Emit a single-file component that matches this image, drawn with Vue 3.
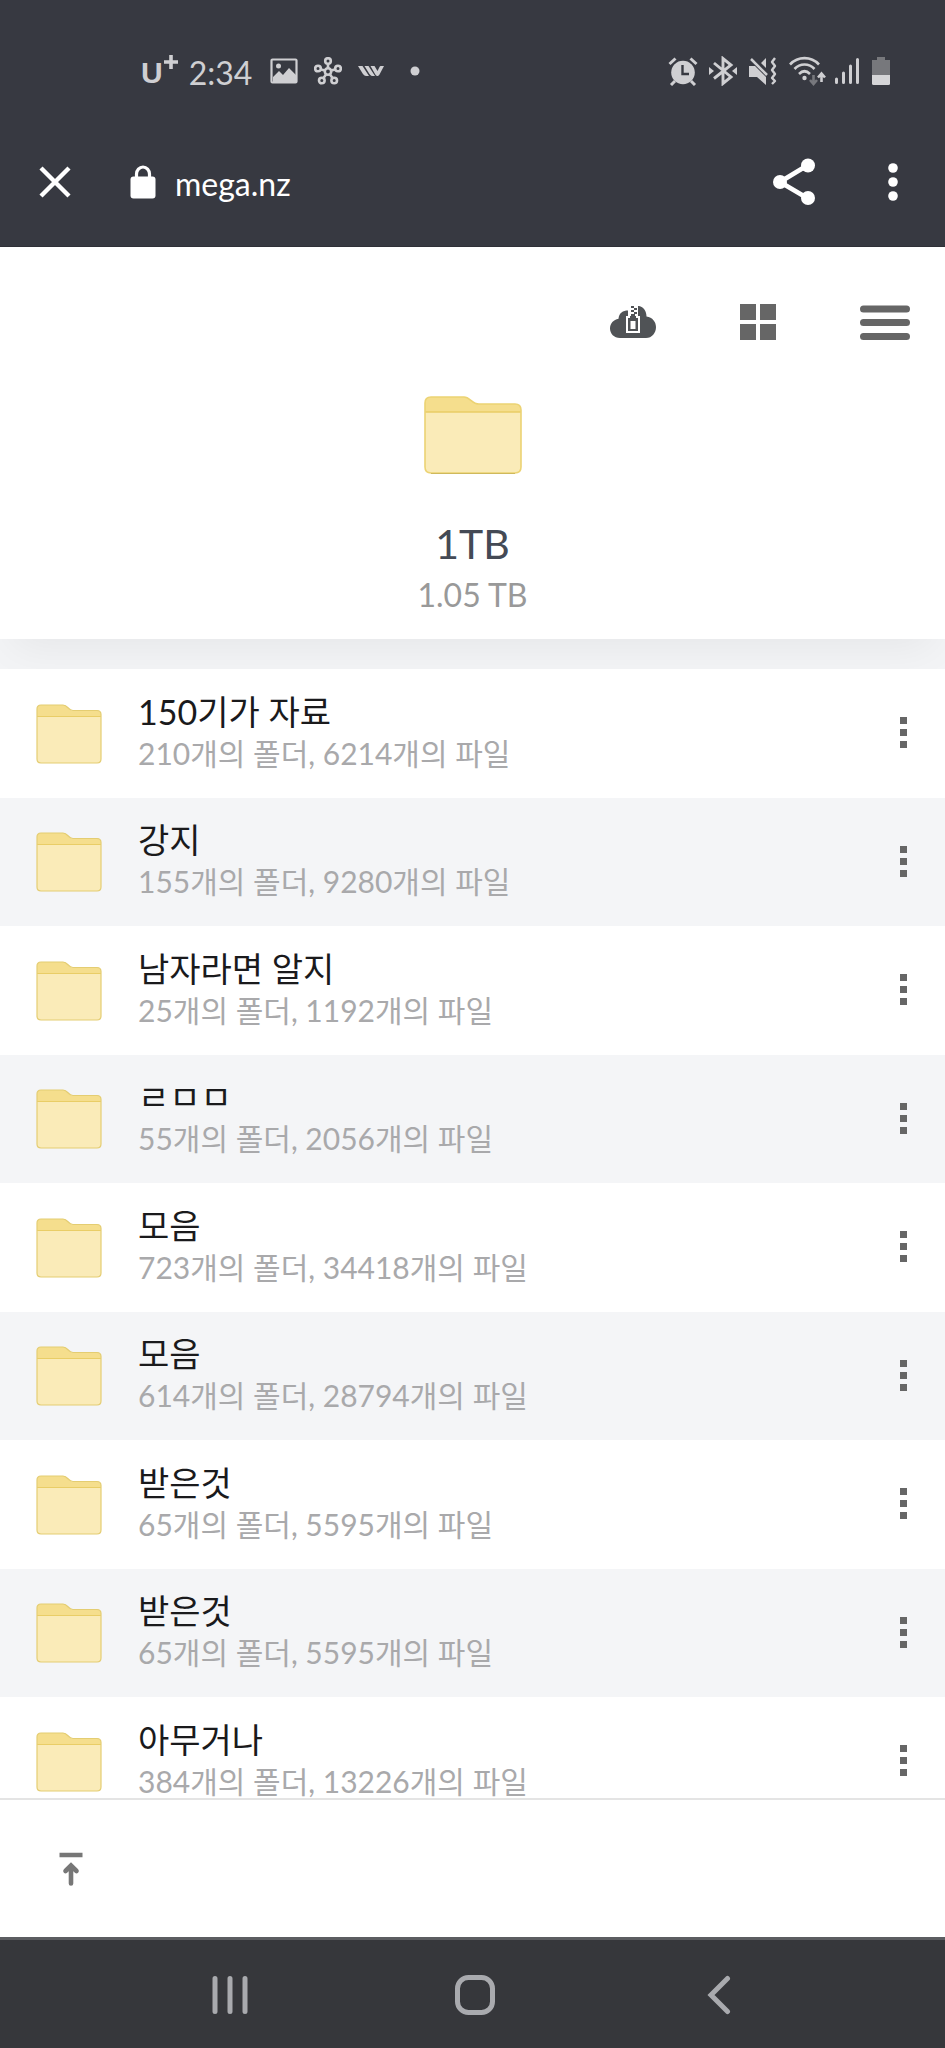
<script setup>
const folders = [
  { id: 1, name: '150기가 자료', dirs: 210, files: 6214 },
  { id: 2, name: '강지', dirs: 155, files: 9280 },
  { id: 3, name: '남자라면 알지', dirs: 25, files: 1192 },
  { id: 4, name: 'ㄹㅁㅁ', dirs: 55, files: 2056 },
  { id: 5, name: '모음', dirs: 723, files: 34418 },
  { id: 6, name: '모음', dirs: 614, files: 28794 },
  { id: 7, name: '받은것', dirs: 65, files: 5595 },
  { id: 8, name: '받은것', dirs: 65, files: 5595 },
  { id: 9, name: '아무거나', dirs: 384, files: 13226 },
]
</script>

<template>
  <div class="screen">
    <header class="chrome">
      <div class="status">
        <div class="status-group left">
          <span class="carrier">U<svg width="16" height="16" viewBox="0 0 16 16"><path d="M8 1v14M1 8h14" stroke="currentColor" stroke-width="3.600" /></svg></span>
          <time class="clock">2:34</time>
          <svg class="picture" width="28" height="28" viewBox="0 0 28 28">
            <rect x="1.500" y="2.500" width="25" height="23" rx="1" fill="none" stroke="currentColor" stroke-width="2.200" />
            <circle cx="8.500" cy="9" r="2.500" fill="currentColor" />
            <path d="M3 20l6-6 4 4 6-7 7 7v7H3z" fill="currentColor" />
          </svg>
          <svg class="hub" width="28" height="28" viewBox="0 0 28 28" fill="none" stroke="currentColor" stroke-width="2.600">
            <circle cx="14" cy="14.500" r="3.200" />
            <circle cx="14" cy="4" r="2.800" />
            <circle cx="4" cy="11.500" r="2.800" />
            <circle cx="24" cy="11.500" r="2.800" />
            <circle cx="7.800" cy="23.500" r="2.800" />
            <circle cx="20.200" cy="23.500" r="2.800" />
            <path d="M14 7v4M7 12.500l4 1M21 12.500l-4 1M9.500 21l2.500-3.500M18.500 21L16 17.500" />
          </svg>
          <svg class="wing" width="26" height="12" viewBox="0 0 26 12" fill="currentColor">
            <path d="M0 1h4.500L11 11H8.500C6 11 5 9 4 7.500zM6.500 1h4l6.500 10h-2.500c-2 0-3-2-4-3.500zM12.500 1h4l3 5 2-4c.4-.8.800-1 1.500-1H26l-4.500 8.500c-.8 1.500-1.500 1.500-2.200 1.500-1 0-1.600-.8-2.300-2z" />
          </svg>
          <svg class="dot" width="10" height="10" viewBox="0 0 10 10"><circle cx="5" cy="5" r="4.500" fill="currentColor" /></svg>
        </div>
        <div class="status-group right">
          <svg width="30" height="30" viewBox="0 0 30 30" fill="none" stroke="currentColor">
            <circle cx="15" cy="16.500" r="11.800" fill="currentColor" stroke="none" />
            <path d="M1.500 8l6-5.500M28.500 8l-6-5.500" stroke-width="3" />
            <path d="M7 25l-4 4M23 25l4 4" stroke-width="3" />
            <path d="M14.500 9v9H21" stroke="#373941" stroke-width="2.400" />
          </svg>
          <svg width="28" height="30" viewBox="0 0 28 30" fill="none" stroke="currentColor" stroke-width="2.900">
            <path d="M5 7l17 14-8 6.500V2.500L22 9 5 22.500" />
            <path d="M0 11l5 4-5 4zM28 11l-5 4 5 4z" fill="currentColor" stroke="none" />
          </svg>
          <svg width="30" height="30" viewBox="0 0 30 30">
            <path d="M1 10h6l11 11v8l-9-8H1zM18 2v10l-5-5z" fill="currentColor" />
            <path d="M3 3l16 16" stroke="currentColor" stroke-width="2.500" />
            <path d="M27 2l-3 4 3 4-3 4 3 4-3 4 3 3-3 3" fill="none" stroke="currentColor" stroke-width="2.400" stroke-linejoin="round" />
          </svg>
          <svg class="wifi" width="37" height="30" viewBox="0 0 37 30" fill="none" stroke="currentColor" stroke-width="2.600">
            <path d="M1 8.500c8-8.500 21-8.500 29 0M5.500 13c5.500-6 14.500-6 20 0M10 18c3.500-3.500 7.500-3.500 11 0" />
            <circle cx="15.500" cy="22" r="2.200" fill="currentColor" stroke="none" />
            <path d="M24.500 19v8M21 24l3.500 4 3.500-4" stroke="#77787d" />
            <path d="M32.500 26v-8M29 21.500l3.500-4 3.500 4" />
          </svg>
          <svg width="26" height="28" viewBox="0 0 26 28" stroke="currentColor" stroke-width="3" stroke-linecap="round">
            <path d="M2.500 22v3.500M9.500 16v9.500M16.500 9v16.500M23.500 2.500v23" />
          </svg>
          <svg class="battery" width="20" height="30" viewBox="0 0 20 30">
            <path d="M6 1h8v3h5v15H1V4h5z" fill="#77787c" />
            <path d="M1 19h18v8.500q0 1.500-1.500 1.500h-15Q1 29 1 27.500z" fill="#d5d5d7" />
          </svg>
        </div>
      </div>

      <div class="toolbar">
        <button class="bar-btn close" type="button" aria-label="닫기">
          <svg width="32" height="32" viewBox="0 0 32 32"><path d="M2 2l28 28M30 2L2 30" stroke="currentColor" stroke-width="4.400" /></svg>
        </button>
        <svg class="lock" width="26" height="34" viewBox="0 0 26 34">
          <path d="M6.500 14V9a6.500 7 0 0 1 13 0v5" fill="none" stroke="currentColor" stroke-width="3.200" />
          <rect x="0.500" y="11.500" width="25" height="22" rx="3" fill="currentColor" />
        </svg>
        <span class="host">mega.nz</span>
        <button class="bar-btn share" type="button" aria-label="공유">
          <svg width="42" height="48" viewBox="0 0 42 48">
            <path d="M35 7L7 24l28 16.500" fill="none" stroke="currentColor" stroke-width="4.800" />
            <circle cx="35" cy="7.500" r="7" fill="currentColor" /><circle cx="7" cy="24" r="7" fill="currentColor" /><circle cx="35" cy="40" r="7" fill="currentColor" />
          </svg>
        </button>
        <button class="bar-btn" type="button" aria-label="더보기">
          <svg width="10" height="38" viewBox="0 0 10 38" fill="currentColor"><circle cx="5" cy="5" r="4.800" /><circle cx="5" cy="19" r="4.800" /><circle cx="5" cy="33" r="4.800" /></svg>
        </button>
      </div>
    </header>

    <section class="summary">
      <div class="actions">
        <button type="button" aria-label="ZIP으로 다운로드">
          <svg width="48" height="36" viewBox="0 0 48 36">
            <path d="M11 34C5 34 1 29.500 1 24.500c0-5 3.500-9 8.500-9.800C10 9 14 6.500 19 6.500V2h11c4.500 1 7.500 5 7.500 10.500 6 .8 9.500 5.500 9.500 10.500 0 6-4 11-10 11z" fill="#505356" />
            <path d="M19 1h10v11h2v17H17V12h2z" fill="#fff" />
            <path d="M19 14h2v-2h1V10h4v2h1v2h2v13H19z" fill="#505356" />
            <path d="M21.500 17h5v8h-5z" fill="#fff" />
            <path d="M22 2h3v2h-3zM25 4h3v2h-3zM22 6h3v2h-3zM25 8h3v2h-3z" fill="#505356" />
          </svg>
        </button>
        <button type="button" aria-label="격자 보기">
          <svg width="38" height="38" viewBox="0 0 38 38" fill="#666"><path d="M1 1h16v16H1zM21 1h16v16H21zM1 21h16v16H1zM21 21h16v16H21z" /></svg>
        </button>
        <button type="button" aria-label="메뉴">
          <svg width="52" height="38" viewBox="0 0 52 38"><path d="M4.500 6h43M4.500 19.500h43M4.500 33.500h43" stroke="#666" stroke-width="7" stroke-linecap="round" /></svg>
        </button>
      </div>
      <svg class="folder-lg" width="98" height="80" viewBox="0 0 98 80">
        <path d="M1 8q0-6 6-6h33c6 0 8 7 15 7h36q6 0 6 6v10H1z" fill="#f5de8d" />
        <path d="M1 17h96v55q0 6-6 6H7q-6 0-6-6z" fill="#faebb8" />
        <path d="M1 17h96" stroke="#e9cd66" stroke-width="1.500" />
        <path d="M1 8q0-6 6-6h33c6 0 8 7 15 7h36q6 0 6 6v57q0 6-6 6H7q-6 0-6-6z" fill="none" stroke="#ecd373" stroke-width="1.600" />
        <path d="M7 78.500h84" stroke="#cfb95c" />
      </svg>
      <h1>1TB</h1>
      <p class="total">1.05 TB</p>
    </section>

    <ul class="list">
      <li v-for="f in folders" :key="f.id" class="row">
        <svg class="folder" width="66" height="60" viewBox="0 0 66 60">
          <path d="M1 5q0-4 4-4h22c5 0 5 5.500 10 5.500h24q4 0 4 4V20H1z" fill="#f5de8d" />
          <path d="M1 12.500h64V55q0 4-4 4H5q-4 0-4-4z" fill="#faebb8" />
          <path d="M1 12.500h64" stroke="#e9cd66" />
          <path d="M1 5q0-4 4-4h22c5 0 5 5.500 10 5.500h24q4 0 4 4V55q0 4-4 4H5q-4 0-4-4z" fill="none" stroke="#e4cd72" stroke-width="1.200" />
        </svg>
        <div class="text">
          <a class="name" href="#">{{ f.name }}</a>
          <span class="info">{{ f.dirs }}개의 폴더, {{ f.files }}개의 파일</span>
        </div>
        <button class="more" type="button" :aria-label="f.name + ' 옵션'"><i></i><i></i><i></i></button>
      </li>
    </ul>

    <footer class="dock">
      <button type="button" aria-label="맨 위로">
        <svg width="24" height="34" viewBox="0 0 24 34" fill="none" stroke="#777">
          <path d="M0.500 3h23" stroke-width="4.500" />
          <path d="M12 31.500V14M6.500 19l5.500-5.500 5.500 5.500" stroke-width="4.600" stroke-linecap="round" />
        </svg>
      </button>
    </footer>

    <nav class="system">
      <button type="button" aria-label="최근 앱">
        <svg width="38" height="40" viewBox="0 0 38 40" stroke="currentColor" stroke-width="5" stroke-linecap="round"><path d="M4 3.500v33M19 3.500v33M34 3.500v33" /></svg>
      </button>
      <button type="button" aria-label="홈">
        <svg width="42" height="42" viewBox="0 0 42 42"><rect x="3.500" y="3.500" width="35" height="35" rx="11" fill="none" stroke="currentColor" stroke-width="5" /></svg>
      </button>
      <button type="button" aria-label="뒤로">
        <svg width="24" height="40" viewBox="0 0 24 40"><path d="M20.500 3.500L4 20l16.500 16.500" fill="none" stroke="currentColor" stroke-width="5" stroke-linecap="round" /></svg>
      </button>
    </nav>
  </div>
</template>

<style>
body {
  margin: 0;
  background: #f3f4f6;
}
</style>

<style scoped>
.screen {
  height: 100vh;
  display: flex;
  flex-direction: column;
  overflow: hidden;
  font-family: Lato, "Noto Sans CJK KR", sans-serif;
}
.chrome,
.summary,
.dock,
.system {
  flex: none;
}
button {
  border: 0;
  padding: 0;
  background: none;
  color: inherit;
  display: flex;
  align-items: center;
  justify-content: center;
}
svg {
  display: block;
  flex: none;
}
.chrome {
  background: #373941;
  color: #fff;
  border-bottom: 1px solid #2f3037;
}
.status {
  display: flex;
  justify-content: space-between;
  align-items: center;
  height: 142px;
  padding: 0 54px 0 141px;
  color: #cfcfd2;
}
.status-group {
  display: flex;
  align-items: center;
}
.carrier {
  display: flex;
  align-items: flex-start;
  padding-top: 4px;
  font: 700 30px/34px "Liberation Sans", sans-serif;
}
.carrier svg {
  margin-top: -2px;
}
.clock {
  margin-left: 10px;
  padding-top: 4px;
  font: 400 32px/34px Lato, sans-serif;
}
.picture {
  margin-left: auto;
}
.left {
  width: 279px;
}
.hub,
.wing {
  margin-left: 16px;
}
.dot {
  margin-left: 26px;
}
.right {
  gap: 11px;
}
.right .wifi {
  margin-right: -3px;
}
.toolbar {
  display: flex;
  align-items: center;
  height: 80px;
  padding: 0 47px 24px 39px;
}
.lock {
  margin-left: 59px;
}
.host {
  margin-left: 19px;
  padding-top: 4px;
  font-size: 32px;
  line-height: 40px;
}
.share {
  margin-left: auto;
  margin-right: 73px;
}
.summary {
  position: relative;
  z-index: 1;
  display: flex;
  flex-direction: column;
  align-items: center;
  padding: 56px 34px 24px;
  background: #fff;
  box-shadow: 0 20px 40px -12px rgba(0, 0, 0, 0.06);
}
.actions {
  align-self: stretch;
  display: flex;
  align-items: center;
  justify-content: flex-end;
  gap: 82px;
}
.folder-lg {
  margin-top: 54px;
}
h1 {
  margin: 44px 0 0;
  font-size: 41px;
  font-weight: 400;
  line-height: 50px;
  color: #444a55;
}
.total {
  margin: 6px 0 0;
  font-size: 32px;
  line-height: 40px;
  color: #999;
}
.list {
  position: relative;
  z-index: 2;
  flex: 1 1 0;
  min-height: 0;
  overflow: hidden;
  margin: 30px 0 0;
  padding: 0;
  list-style: none;
  background: #fff;
}
.row {
  display: flex;
  align-items: center;
  height: 129px;
  padding: 0 38px 0 36px;
}
.row:nth-child(even) {
  height: 128px;
  background: #f4f5f7;
}
.text {
  flex: 1;
  display: flex;
  flex-direction: column;
  margin-left: 36px;
  padding-bottom: 4px;
}
.name {
  font-size: 34px;
  line-height: 42px;
  color: #1a1a1c;
  text-decoration: none;
}
.info {
  font-size: 30px;
  line-height: 40px;
  color: #a9a9ab;
}
.more {
  flex-direction: column;
  gap: 5px;
  height: 44px;
  padding-bottom: 2px;
}
.more i {
  width: 7px;
  height: 7px;
  background: #666;
}
.dock {
  position: relative;
  z-index: 3;
  display: flex;
  align-items: center;
  height: 137px;
  padding: 0 59px;
  border-top: 2px solid #e4e4e4;
  background: #fff;
}
.system {
  display: grid;
  grid-template-columns: repeat(3, 26%);
  justify-content: center;
  height: 108px;
  padding-top: 2px;
  padding-left: 4px;
  box-sizing: border-box;
  height: 111px;
  border-top: 3px solid #5c5d61;
  background: #36373b;
  color: #a9aaae;
}
</style>
